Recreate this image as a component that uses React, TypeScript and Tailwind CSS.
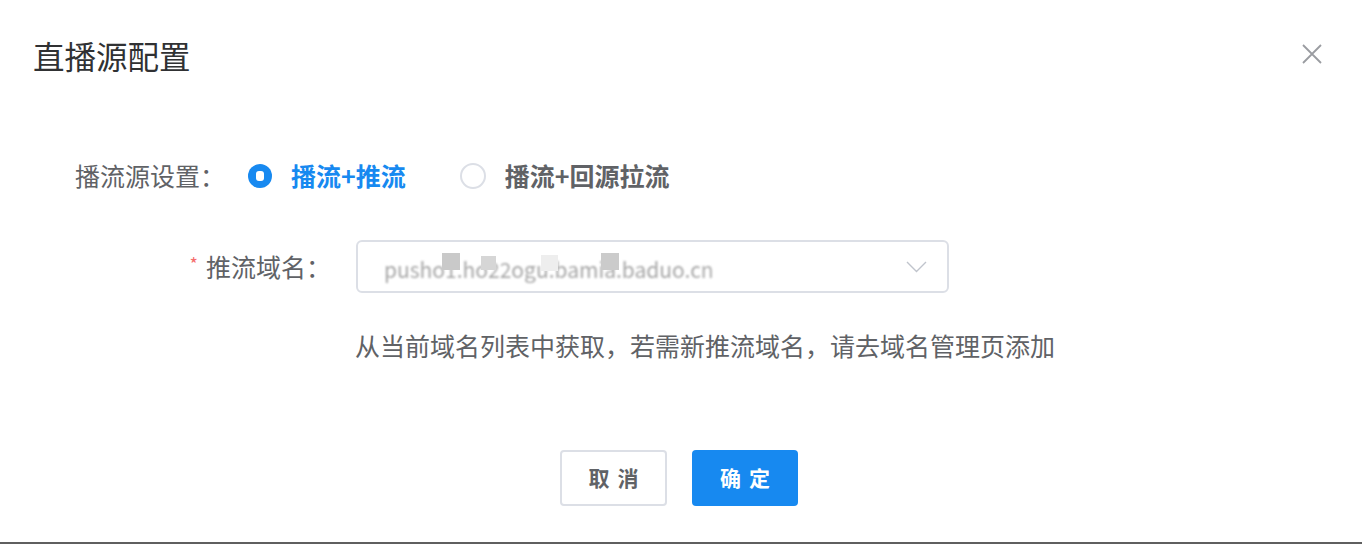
const FONT = "font-['PingFang_SC','Noto_Sans_CJK_SC',sans-serif]";

function Radio({ checked, label }: { checked?: boolean; label: string }) {
  return (
    <div className="flex items-center gap-[19px]">
      {checked ? (
        <span className="w-[24px] h-[24px] rounded-full bg-[#1789f0] flex items-center justify-center">
          <span className="w-[8px] h-[10px] rounded-[3px] bg-white" />
        </span>
      ) : (
        <span className="w-[26px] h-[26px] rounded-full border-2 border-[#dcdfe6] bg-white" />
      )}
      <span className={`text-[25px] font-bold ${checked ? 'text-[#1789f0]' : 'text-[#606266]'}`}>
        {label}
      </span>
    </div>
  );
}

export default function App() {
  return (
    <div className={`w-[1362px] h-[544px] bg-white border-b-2 border-[#5f5f5f] flex flex-col ${FONT}`}>
      {/* Header */}
      <div className="h-[112px] flex items-center justify-between pl-[33px] pr-[40px]">
        <h1 className="text-[31.5px] leading-none text-[#303133]">直播源配置</h1>
        <svg width="20" height="20" viewBox="0 0 20 20" className="-mt-[4px]">
          <path d="M1 1L19 19M19 1L1 19" stroke="#9a9ca1" strokeWidth="1.8" />
        </svg>
      </div>

      {/* Source type */}
      <div className="mt-[40px] h-[48px] flex items-center pl-[75px]">
        <span className="text-[25px] text-[#606266] mr-[23px]">播流源设置：</span>
        <Radio checked label="播流+推流" />
        <div className="ml-[54px]">
          <Radio label="播流+回源拉流" />
        </div>
      </div>

      {/* Push domain */}
      <div className="mt-[40px] flex items-center pl-[75px]">
        <div className="w-[256px] flex items-center justify-end text-[25px] text-[#606266]">
          <span className="text-[#f56c6c] text-[18px] mr-[8px] -mt-[6px]">*</span>
          推流域名：
        </div>
        <div className="ml-[25px] relative w-[593px] h-[53px] border-2 border-[#dcdfe6] rounded-[6px] flex items-center pl-[26px] pr-[20px]">
          <span className="flex-1 text-[21px] text-[#888] blur-[0.8px] opacity-75 mt-[6px] overflow-hidden whitespace-nowrap [mask-image:linear-gradient(to_right,black_60%,transparent_90%)]">
            pusho1.ho22ogu.bamia.baduo.cn
          </span>
          <span className="absolute left-[84px] top-[11px] w-[18px] h-[17px] bg-[#c9c9c9]" />
          <span className="absolute left-[123px] top-[14px] w-[15px] h-[14px] bg-[#d6d6d6]" />
          <span className="absolute left-[183px] top-[13px] w-[17px] h-[16px] bg-[#eeeeee]" />
          <span className="absolute left-[243px] top-[11px] w-[18px] h-[17px] bg-[#cbcbcb]" />
          <svg width="21" height="12" viewBox="0 0 21 12">
            <path d="M1 1L10.5 10.5L20 1" fill="none" stroke="#c0c4cc" strokeWidth="1.4" />
          </svg>
        </div>
      </div>

      {/* Help text */}
      <p className="mt-[35px] pl-[355px] text-[25px] leading-[34px] text-[#606266]">
        从当前域名列表中获取，若需新推流域名，请去域名管理页添加
      </p>

      {/* Footer */}
      <div className="mt-[88px] flex justify-center gap-[25px] pr-[4px]">
        <button className="w-[107px] h-[56px] border-2 border-[#dcdfe6] rounded-[4px] bg-white text-[21px] font-bold text-[#606266] tracking-[8px] pl-[8px]">
          取消
        </button>
        <button className="w-[106px] h-[56px] rounded-[4px] bg-[#1789f0] text-[21px] font-bold text-white tracking-[8px] pl-[8px]">
          确定
        </button>
      </div>
    </div>
  );
}
